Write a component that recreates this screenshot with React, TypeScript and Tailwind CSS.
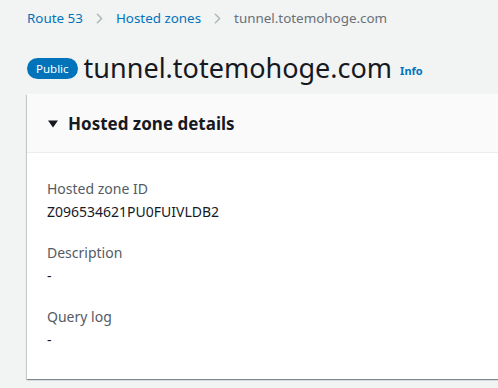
import { ChevronRight } from "lucide-react";

const Field = ({ label, value }: { label: string; value: string }) => (
  <div className="flex flex-col gap-[3px]">
    <span className="text-[14px] leading-[20px] text-[#545b64]">{label}</span>
    <span className="text-[14px] leading-[20px] text-[#16191f]">{value}</span>
  </div>
);

const App = () => {
  return (
    <div
      className="min-h-[388px] w-[498px] overflow-hidden bg-[#f2f3f3]"
      style={{ fontFamily: '"Noto Sans", "Open Sans", Arial, sans-serif' }}
    >
      <nav className="flex items-center gap-[8px] pl-[27px] pt-[8px] text-[13.4px] leading-[20px]">
        <a className="text-[#0073bb]">Route 53</a>
        <ChevronRight className="h-[17px] w-[17px] text-[#aab7b8]" strokeWidth={2} />
        <a className="text-[#0073bb]">Hosted zones</a>
        <ChevronRight className="h-[17px] w-[17px] text-[#aab7b8]" strokeWidth={2} />
        <span className="text-[#687078]">tunnel.totemohoge.com</span>
      </nav>

      <div className="mt-[22px] flex items-center pl-[27px]">
        <span className="rounded-full bg-[#0073bb] px-[9px] text-[11.5px] leading-[21px] text-white">
          Public
        </span>
        <h1 className="ml-[6px] text-[27px] leading-[36px] text-[#16191f]">tunnel.totemohoge.com</h1>
        <a className="ml-[8px] mt-[6px] text-[11px] font-bold text-[#0073bb]">Info</a>
      </div>

      <div className="ml-[27px] mt-[8px] w-[500px] bg-white shadow-[0_1px_1px_0_rgba(0,28,36,0.3),1px_1px_1px_0_rgba(0,28,36,0.15),-1px_1px_1px_0_rgba(0,28,36,0.15)]">
        <div className="flex h-[59px] items-center gap-[10px] border-b border-[#eaeded] bg-[#fafafa] pl-[21px] pt-[2px]">
          <svg width="10" height="8" viewBox="0 0 10 8">
            <path d="M0 0.5 L10 0.5 L5 7.5 Z" fill="#16191f" />
          </svg>
          <h2 className="text-[17px] font-bold leading-[24px] text-[#16191f]">Hosted zone details</h2>
        </div>
        <div className="flex flex-col gap-[21px] px-[20px] pb-[29px] pt-[26px]">
          <Field label="Hosted zone ID" value="Z096534621PU0FUIVLDB2" />
          <Field label="Description" value="-" />
          <Field label="Query log" value="-" />
        </div>
      </div>
    </div>
  );
};

export default App;
